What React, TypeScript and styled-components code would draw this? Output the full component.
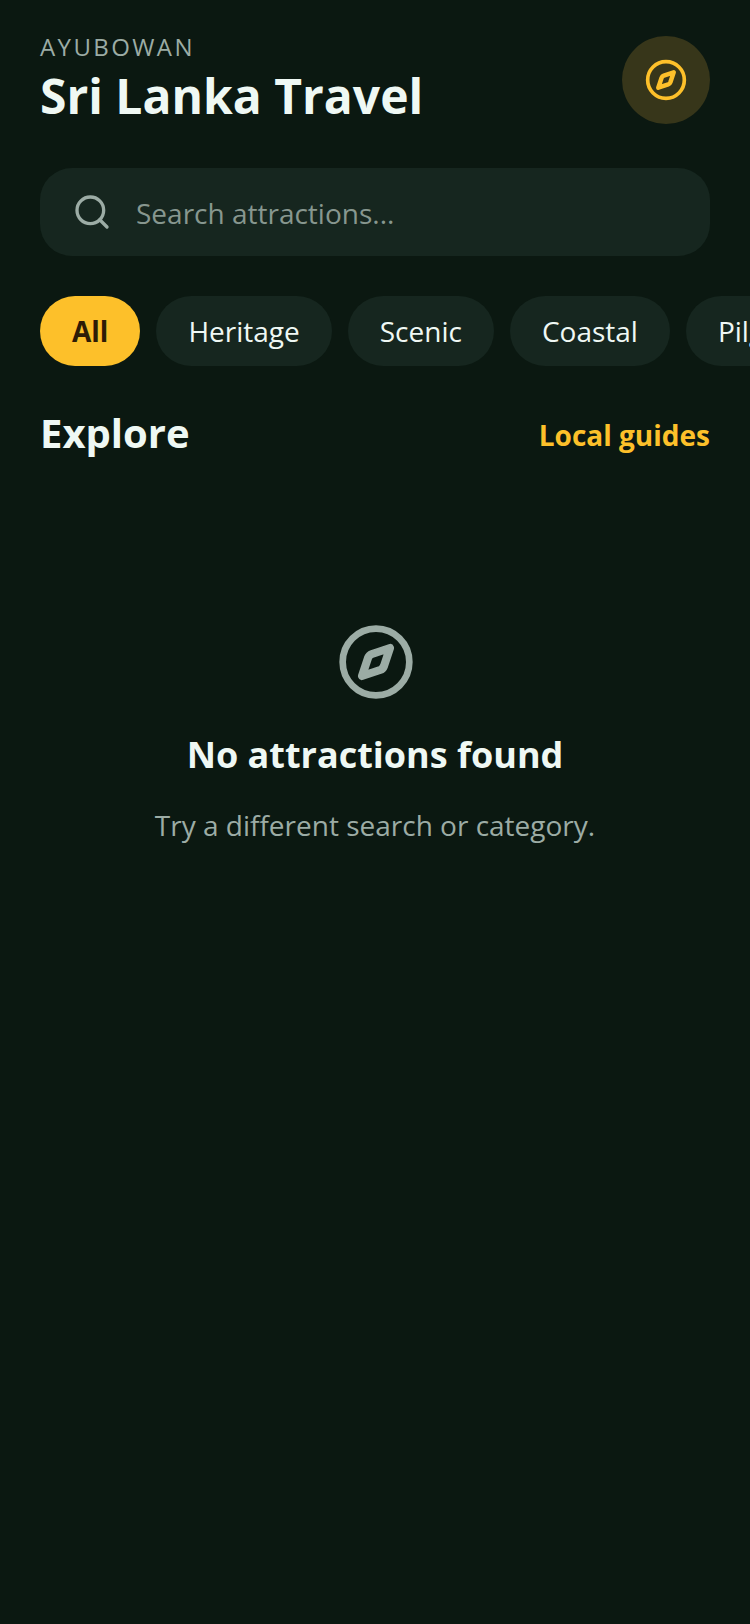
import React from 'react';
import styled, { createGlobalStyle } from 'styled-components';
import { Search } from 'lucide-react';

const Global = createGlobalStyle`
  html, body { margin: 0; padding: 0; background: #0b1811; }
  body { font-family: "Open Sans", "Noto Sans", sans-serif; }
  * { box-sizing: border-box; }
`;

const Page = styled.main`
  width: 750px;
  height: 1624px;
  overflow: hidden;
  background: #0b1811;
  color: #eff8f4;
`;

const Header = styled.header`
  display: flex;
  justify-content: space-between;
  align-items: center;
  padding: 32px 40px 0;
`;

const Greeting = styled.div`
  font-size: 24px;
  line-height: 30px;
  margin-bottom: 2px;
  letter-spacing: 2.4px;
  color: #9caca5;
`;

const Title = styled.h1`
  margin: 0;
  font-size: 48px;
  line-height: 64px;
  font-weight: 700;
`;

const Badge = styled.div`
  width: 88px;
  height: 88px;
  border-radius: 50%;
  display: flex;
  align-items: center;
  justify-content: center;
  background: #37361a;
  color: #fdc02a;
`;

const SearchBar = styled.label`
  display: flex;
  align-items: center;
  gap: 24px;
  height: 88px;
  margin: 40px 40px 0;
  padding: 0 32px;
  border-radius: 32px;
  background: #16261f;
  color: #9caca5;
`;

const SearchInput = styled.input`
  flex: 1;
  min-width: 0;
  border: 0;
  outline: 0;
  padding: 2px 0 0;
  background: none;
  font: 400 28px "Open Sans", sans-serif;
  color: #eff8f4;
  &::placeholder { color: #87978f; opacity: 1; }
`;

const Chips = styled.div`
  display: flex;
  gap: 16px;
  margin-top: 40px;
  padding: 0 40px;
  overflow: hidden;
`;

const Chip = styled.button<{ $active?: boolean }>`
  flex: none;
  height: 70px;
  padding: 0 32px;
  border: 0;
  border-radius: 35px;
  font: ${p => (p.$active ? 700 : 400)} 28px "Open Sans", sans-serif;
  background: ${p => (p.$active ? '#fdc02a' : '#16261f')};
  color: ${p => (p.$active ? '#2e1c06' : '#eff8f4')};
`;

const SectionHead = styled.div`
  display: flex;
  justify-content: space-between;
  align-items: center;
  margin-top: 40px;
  padding: 0 40px;
`;

const SectionTitle = styled.h2`
  margin: 0;
  font-size: 40px;
  line-height: 54px;
  font-weight: 700;
`;

const GuideLink = styled.a`
  margin-top: 4px;
  font-size: 28px;
  font-weight: 700;
  color: #fdc02a;
`;

const Empty = styled.section`
  display: flex;
  flex-direction: column;
  align-items: center;
  padding-top: 162px;
  color: #9caca5;
`;

const EmptyIcon = styled.div`
  display: flex;
  margin-left: 1px;
`;

const EmptyTitle = styled.h3`
  margin: 29px 0 0;
  font-size: 36px;
  line-height: 48px;
  font-weight: 700;
  color: #eff8f4;
`;

const EmptyText = styled.p`
  margin: 27px 0 0;
  font-size: 28px;
  line-height: 38px;
  color: #9caca5;
`;

const CompassIcon = ({ size }: { size: number }) => (
  <svg width={size} height={size} viewBox="0 0 24 24" fill="none" stroke="currentColor" strokeLinecap="round" strokeLinejoin="round" aria-hidden="true">
    <circle cx="12" cy="12" r="10" strokeWidth="2" />
    <path strokeWidth="2.45" d="M16.2 7.8l-1.8 5.4a2 2 0 0 1-1.2 1.2L7.8 16.2l1.8-5.4a2 2 0 0 1 1.2-1.2z" />
  </svg>
);

const categories = ['All', 'Heritage', 'Scenic', 'Coastal', 'Pilgrimage'];

export default function App() {
  return (
    <Page>
      <Global />
      <Header>
        <div>
          <Greeting>AYUBOWAN</Greeting>
          <Title>Sri Lanka Travel</Title>
        </div>
        <Badge><CompassIcon size={44} /></Badge>
      </Header>
      <SearchBar>
        <Search size={40} />
        <SearchInput placeholder="Search attractions..." />
      </SearchBar>
      <Chips>
        {categories.map((c, i) => <Chip key={c} $active={i === 0}>{c}</Chip>)}
      </Chips>
      <SectionHead>
        <SectionTitle>Explore</SectionTitle>
        <GuideLink>Local guides</GuideLink>
      </SectionHead>
      <Empty>
        <EmptyIcon><CompassIcon size={80} /></EmptyIcon>
        <EmptyTitle>No attractions found</EmptyTitle>
        <EmptyText>Try a different search or category.</EmptyText>
      </Empty>
    </Page>
  );
}
